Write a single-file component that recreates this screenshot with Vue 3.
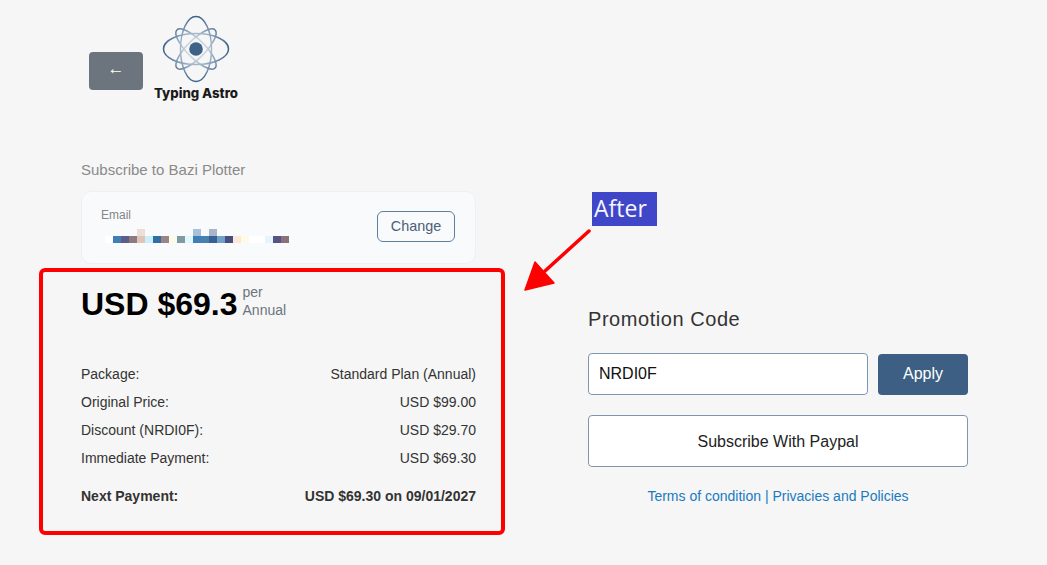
<script setup>
const upper = [
  { col: 4, color: '#ecdfd8' },
  { col: 11, color: '#a8c0d8' },
  { col: 13, color: '#a8b5cc' },
]
const lower = ['#ffffff', '#3f7fb5', '#5d5d8a', '#8f7a80', '#e0c4b8', '#c8f0fa', '#2f6fa5', '#9a8488', '#fdfbe8', '#7f9aa5', '#dff8fa', '#3f7fb5', '#4a80b0', '#3a5f95', '#6fa0c8', '#474f80', '#fde8d8', '#fdfbe5', '#ffffff', '#ffffff', '#e5f5fb', '#555585', '#8a7278']

const upperCells = lower.map((_, i) => upper.find((u) => u.col === i)?.color || 'transparent')

const rows = [
  { label: 'Package:', value: 'Standard Plan (Annual)' },
  { label: 'Original Price:', value: 'USD $99.00' },
  { label: 'Discount (NRDI0F):', value: 'USD $29.70' },
  { label: 'Immediate Payment:', value: 'USD $69.30' },
]
</script>

<template>
  <main class="page">
    <section class="left">
      <header class="brand">
        <button class="back">←</button>
        <div class="logo">
          <svg width="72" height="72" viewBox="-36 -36 72 72">
            <defs>
              <radialGradient id="orbit" gradientUnits="userSpaceOnUse" cx="0" cy="0" r="33">
                <stop offset="0.3" stop-color="#c9d5e0" />
                <stop offset="0.6" stop-color="#8ba3bb" />
                <stop offset="1" stop-color="#3a5f88" />
              </radialGradient>
            </defs>
            <g fill="none" stroke="url(#orbit)" stroke-width="1.5">
              <ellipse rx="27" ry="9" transform="rotate(45)" />
              <ellipse rx="27" ry="9" transform="rotate(-45)" />
              <ellipse rx="32.5" ry="15.5" />
              <ellipse rx="32.5" ry="15.5" transform="rotate(90)" />
            </g>
            <circle r="6.8" fill="#3f6288" />
          </svg>
          <span class="logo-name">Typing Astro</span>
        </div>
      </header>

      <p class="subscribe">Subscribe to Bazi Plotter</p>

      <div class="email-card">
        <div>
          <div class="email-label">Email</div>
          <div class="pixels">
            <div class="pixel-row">
              <i v-for="(c, i) in upperCells" :key="i" :style="{ background: c }" />
            </div>
            <div class="pixel-row">
              <i v-for="(c, i) in lower" :key="i" :style="{ background: c }" />
            </div>
          </div>
        </div>
        <button class="change">Change</button>
      </div>

      <div class="price">
        <span class="amount">USD $69.3</span>
        <span class="per">per<br />Annual</span>
      </div>

      <div class="rows">
        <div v-for="r in rows" :key="r.label" class="row">
          <span>{{ r.label }}</span>
          <span>{{ r.value }}</span>
        </div>
        <div class="row next">
          <span>Next Payment:</span>
          <span>USD $69.30 on 09/01/2027</span>
        </div>
      </div>
    </section>

    <section class="right">
      <h2>Promotion Code</h2>
      <div class="promo">
        <input value="NRDI0F" />
        <button class="apply">Apply</button>
      </div>
      <button class="paypal">Subscribe With Paypal</button>
      <p class="terms">Terms of condition | Privacies and Policies</p>
    </section>

    <!-- annotation on top of the screenshot -->
    <div class="red-box" />
    <div class="after">After</div>
    <svg class="arrow" width="80" height="110" viewBox="0 0 80 110">
      <line x1="69" y1="41" x2="25" y2="81" stroke="#f00" stroke-width="3.5" stroke-linecap="round" />
      <polygon points="5,100 15,72 34,93" fill="#f00" stroke="#f00" stroke-width="1.5" stroke-linejoin="round" />
    </svg>
  </main>
</template>

<style>
html, body {
  margin: 0;
  background: #f6f6f6;
}
</style>

<style scoped>
.page {
  position: relative;
  display: grid;
  grid-template-columns: 395px 380px;
  column-gap: 112px;
  height: 565px;
  padding-left: 81px;
  box-sizing: border-box;
  overflow: hidden;
  background: #f6f6f6;
  font-family: "Liberation Sans", Arial, sans-serif;
  color: #333;
}

.brand {
  display: flex;
  align-items: flex-start;
  height: 101px;
  padding: 13px 0 0 8px;
  box-sizing: border-box;
}

.back {
  width: 54px;
  height: 38px;
  margin-top: 39px;
  padding: 0 0 4px;
  border: 0;
  border-radius: 4px;
  background: #6c757d;
  color: #fff;
  font-size: 17px;
  font-family: "Liberation Sans", sans-serif;
}

.logo {
  display: flex;
  flex-direction: column;
  align-items: center;
  width: 84px;
  margin-left: 11px;
}

.logo svg {
  display: block;
}

.logo-name {
  margin-top: 1px;
  font-family: Inter, sans-serif;
  font-weight: 800;
  font-size: 13.2px;
  line-height: 14px;
  color: #1a1a1a;
  white-space: nowrap;
}

.subscribe {
  margin: 59px 0 0;
  font-size: 15px;
  line-height: 20px;
  color: #8a8a8a;
}

.email-card {
  display: flex;
  justify-content: space-between;
  align-items: flex-start;
  height: 73px;
  margin-top: 11px;
  padding: 16px 20px 0 19px;
  box-sizing: border-box;
  border: 1px solid #edf0f4;
  border-radius: 10px;
  background: #f9fafc;
}

.email-label {
  font-size: 12px;
  line-height: 14px;
  color: #858585;
}

.pixels {
  margin: 7px 0 0 4px;
}

.pixel-row {
  display: flex;
  height: 7px;
}

.pixel-row i {
  width: 8px;
}

.change {
  width: 78px;
  height: 31px;
  margin-top: 3px;
  padding: 0 0 2px;
  border: 1.5px solid #5f7f9f;
  border-radius: 6px;
  background: transparent;
  color: #4a6078;
  font: 14.4px "Liberation Sans", Arial, sans-serif;
}

.price {
  display: flex;
  align-items: flex-start;
  margin-top: 21px;
}

.amount {
  font-size: 32px;
  line-height: 38px;
  font-weight: 700;
  color: #000;
}

.per {
  margin: -2px 0 0 5px;
  font-size: 14px;
  line-height: 18px;
  color: #6c757d;
}

.rows {
  margin-top: 41px;
  font-size: 14px;
}

.row {
  display: flex;
  justify-content: space-between;
  height: 28px;
  line-height: 20px;
}

.row.next {
  margin-top: 10px;
  font-weight: 700;
}

.right {
  padding-top: 307px;
}

h2 {
  margin: 0;
  font-size: 20px;
  line-height: 24px;
  font-weight: 400;
  letter-spacing: 0.55px;
}

.promo {
  display: flex;
  justify-content: space-between;
  align-items: center;
  margin-top: 22px;
}

.promo input {
  width: 280px;
  height: 42px;
  padding: 0 10px;
  box-sizing: border-box;
  border: 1px solid #7e96b0;
  border-radius: 4px;
  background: #fff;
  color: #111;
  font: 16px "Liberation Sans", Arial, sans-serif;
  outline: none;
}

.apply {
  width: 90px;
  height: 41px;
  padding: 0;
  border: 0;
  border-radius: 4px;
  background: #3e5f84;
  color: #fff;
  font: 16px "Liberation Sans", Arial, sans-serif;
}

.paypal {
  display: block;
  width: 100%;
  height: 52px;
  margin-top: 20px;
  padding: 1px 0 0;
  border: 1px solid #7e96b0;
  border-radius: 4px;
  background: #fff;
  color: #222;
  font: 16px "Liberation Sans", Arial, sans-serif;
}

.terms {
  margin: 19px 0 0;
  text-align: center;
  font-size: 14px;
  line-height: 20px;
  color: #1a7ac0;
}

.red-box {
  position: absolute;
  left: 39px;
  top: 268px;
  width: 466px;
  height: 267px;
  box-sizing: border-box;
  border: 4px solid #f00;
  border-radius: 6px;
}

.after {
  position: absolute;
  left: 592px;
  top: 192px;
  width: 65px;
  height: 34px;
  padding-left: 2px;
  box-sizing: border-box;
  background: #4046c8;
  color: #f6f6ff;
  font-family: "Open Sans", sans-serif;
  font-size: 23px;
  line-height: 33px;
}

.arrow {
  position: absolute;
  left: 520px;
  top: 190px;
}
</style>
